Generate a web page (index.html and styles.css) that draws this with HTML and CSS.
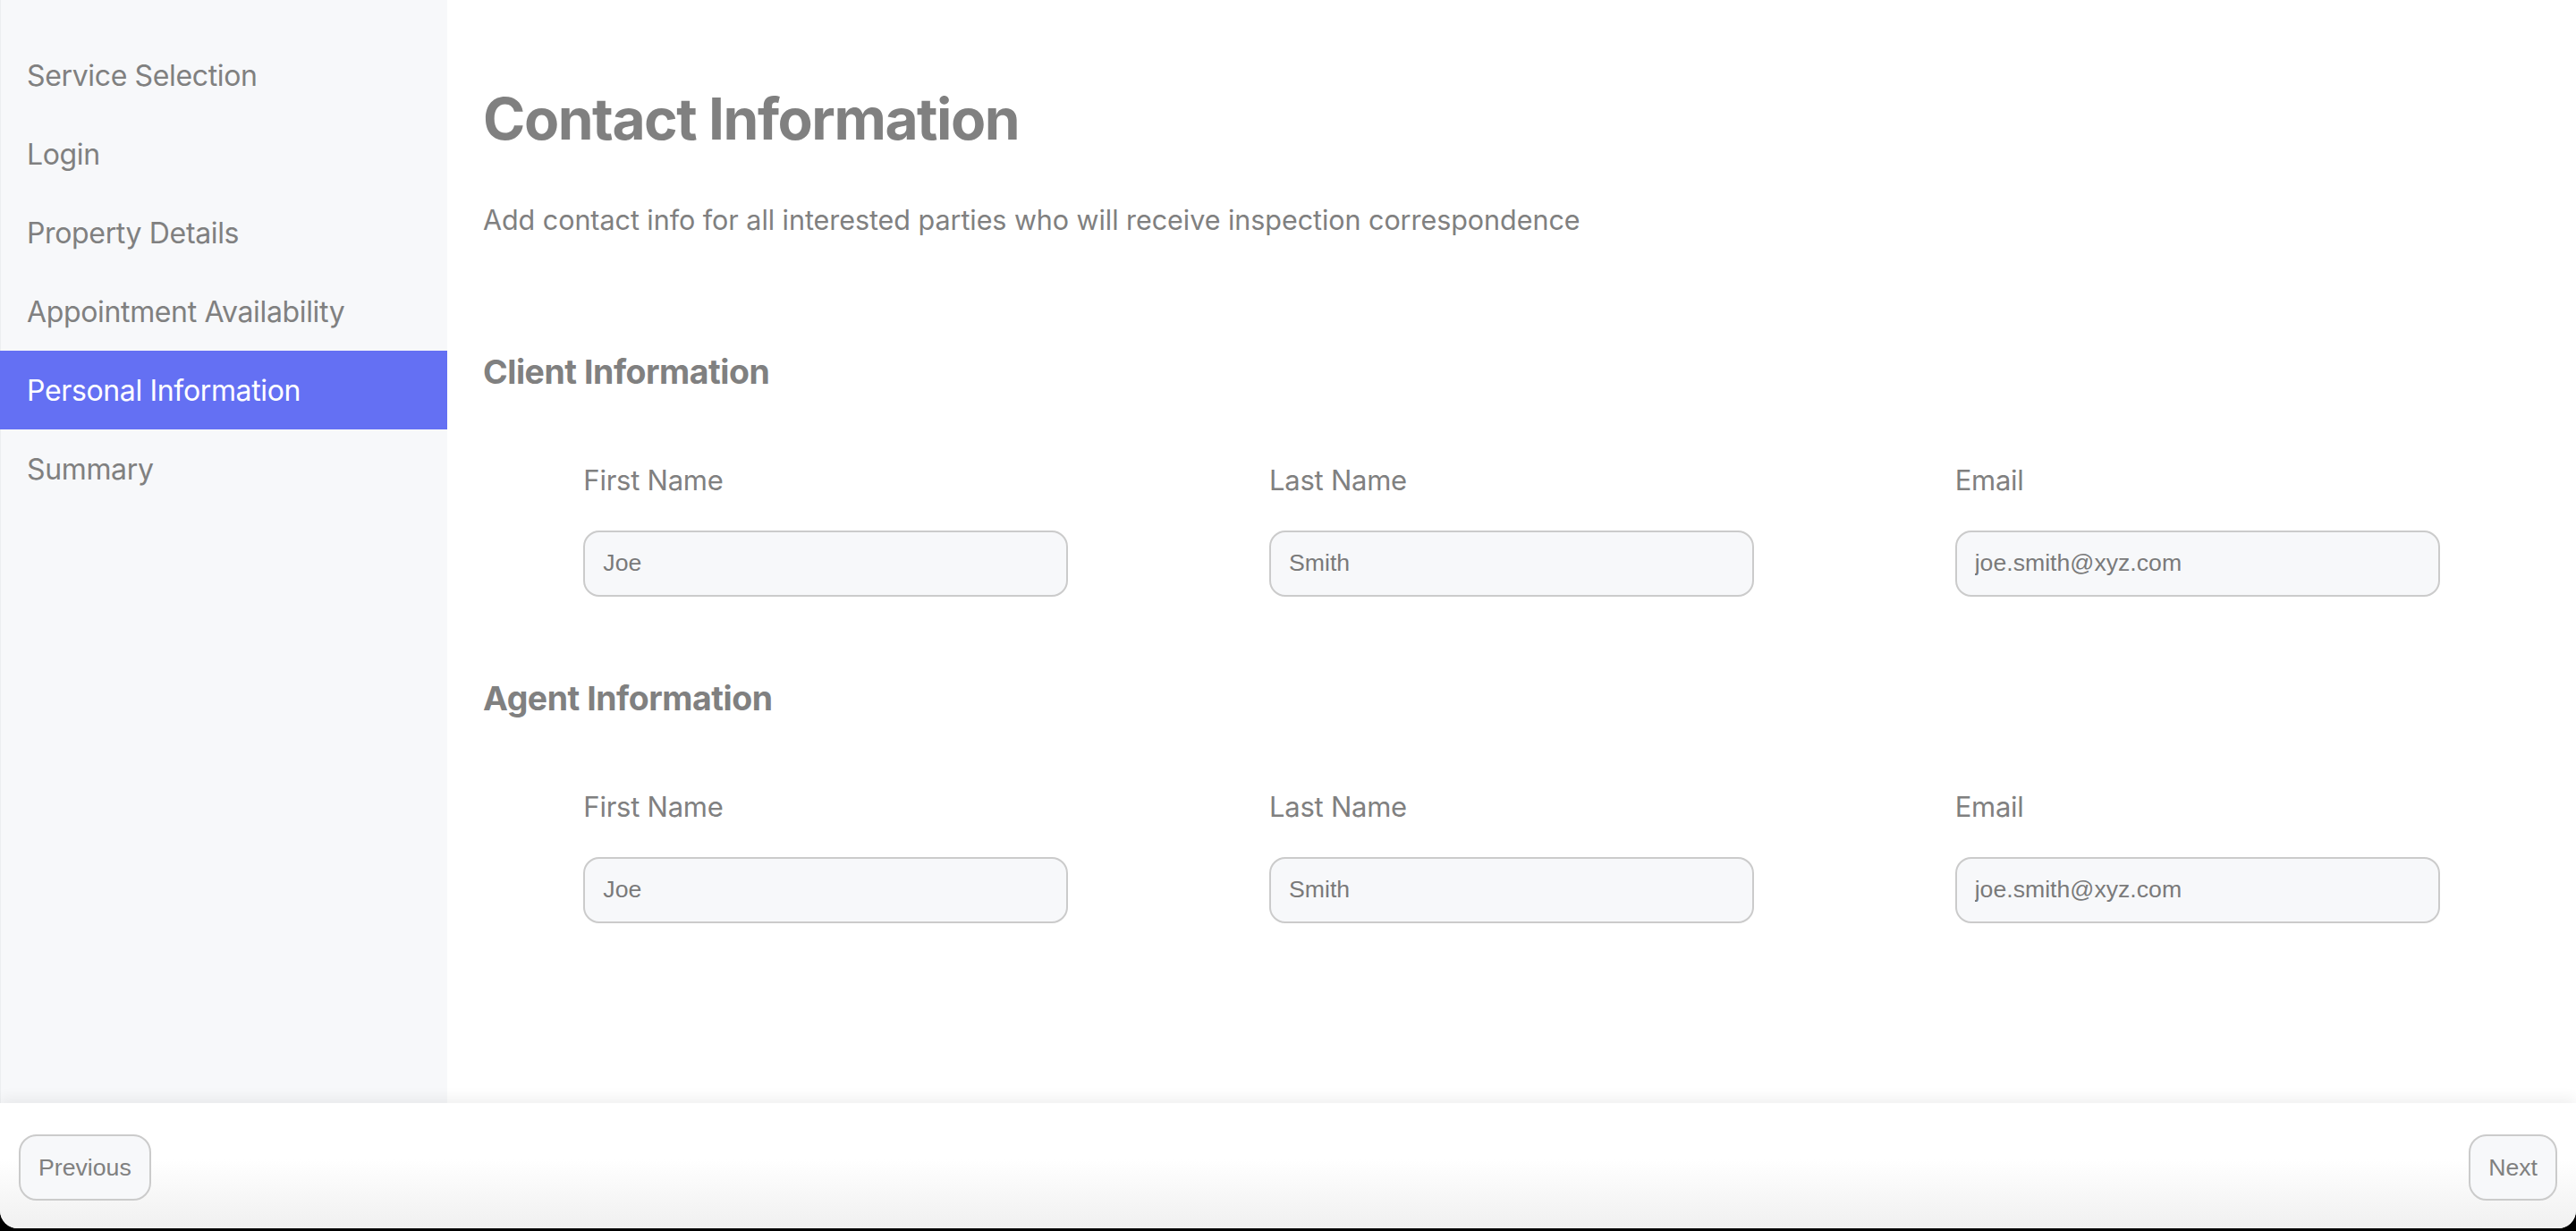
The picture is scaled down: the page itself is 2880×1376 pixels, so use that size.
FILE: index.html
```html
<!DOCTYPE html>
<html lang="en">
<head>
<meta charset="utf-8">
<title>Contact Information</title>
<link rel="stylesheet" href="styles.css">
</head>
<body>
<div class="window">
  <div class="layout">
    <nav class="sidebar">
      <a class="nav-item">Service Selection</a>
      <a class="nav-item">Login</a>
      <a class="nav-item">Property Details</a>
      <a class="nav-item">Appointment Availability</a>
      <a class="nav-item active">Personal Information</a>
      <a class="nav-item">Summary</a>
    </nav>
    <main class="main">
      <h1 class="title">Contact Information</h1>
      <p class="subtitle">Add contact info for all interested parties who will receive inspection correspondence</p>

      <section class="section">
        <h3 class="section-title">Client Information</h3>
        <div class="fields">
          <div class="field">
            <label class="label">First Name</label>
            <input class="input" type="text" value="Joe">
          </div>
          <div class="field">
            <label class="label">Last Name</label>
            <input class="input" type="text" value="Smith">
          </div>
          <div class="field">
            <label class="label">Email</label>
            <input class="input" type="text" value="joe.smith@xyz.com">
          </div>
        </div>
      </section>

      <section class="section">
        <h3 class="section-title">Agent Information</h3>
        <div class="fields">
          <div class="field">
            <label class="label">First Name</label>
            <input class="input" type="text" value="Joe">
          </div>
          <div class="field">
            <label class="label">Last Name</label>
            <input class="input" type="text" value="Smith">
          </div>
          <div class="field">
            <label class="label">Email</label>
            <input class="input" type="text" value="joe.smith@xyz.com">
          </div>
        </div>
      </section>
    </main>
  </div>
  <footer class="footer">
    <button class="btn" type="button">Previous</button>
    <button class="btn" type="button">Next</button>
  </footer>
</div>
</body>
</html>
```
FILE: styles.css
```css
* { box-sizing: border-box; }

html, body {
  margin: 0;
  padding: 0;
  background: #000;
}

body {
  font-family: Inter, "Noto Sans", sans-serif;
  color: #808080;
}

.window {
  height: 1373px;
  display: flex;
  flex-direction: column;
  background: #fff;
  border-radius: 0 0 20px 20px;
  overflow: hidden;
}

.layout {
  flex: 1;
  display: flex;
  min-height: 0;
}

.sidebar {
  width: 500px;
  flex: none;
  background: #f7f8fa;
  border-left: 1px solid #eceef0;
  padding-top: 40px;
  display: flex;
  flex-direction: column;
}

.nav-item {
  height: 88px;
  display: flex;
  align-items: center;
  padding-left: 29px;
  font-size: 32px;
  color: #808080;
  letter-spacing: -0.35px;
}

.nav-item.active {
  background: #6470f3;
  color: #fff;
  margin-left: -1px;
  padding-left: 30px;
}

.main {
  flex: 1;
  padding: 95px 40px 0 40px;
}

.title {
  margin: 0;
  font-size: 64px;
  line-height: 76.8px;
  font-weight: 700;
  letter-spacing: -1.45px;
}

.subtitle {
  margin: 56px 0 0 0;
  font-size: 30.5px;
  line-height: 36px;
  letter-spacing: -0.05px;
}

.section {
  margin-top: 129px;
}

.section + .section {
  margin-top: 91px;
}

.section-title {
  margin: 0;
  font-size: 37.44px;
  line-height: 45px;
  font-weight: 700;
  letter-spacing: -0.45px;
}

.fields {
  display: grid;
  grid-template-columns: repeat(3, 1fr);
  margin-top: 81px;
}

.field {
  width: 542px;
  justify-self: center;
  display: flex;
  flex-direction: column;
}

.label {
  font-size: 31px;
  line-height: 36px;
  letter-spacing: -0.25px;
}

.input {
  margin-top: 38px;
  height: 74px;
  width: 100%;
  border: 2px solid #cbcbcb;
  border-radius: 18px;
  background: #f7f8fa;
  padding: 0 20px;
  font-family: "Liberation Sans", Arial, sans-serif;
  font-size: 26.67px;
  color: #7a7a7a;
  outline: none;
}

.footer {
  height: 140px;
  flex: none;
  display: flex;
  justify-content: space-between;
  align-items: flex-start;
  padding: 35px 21px 0 21px;
  background: linear-gradient(to bottom, #ffffff 45%, #f0f0f0 100%);
  box-shadow: 0 -6px 14px rgba(0, 0, 0, 0.06);
  position: relative;
}

.btn {
  height: 74px;
  padding: 0 20px;
  border: 2px solid #cbcbcb;
  border-radius: 20px;
  background: #f7f8fa;
  font-family: "Liberation Sans", Arial, sans-serif;
  font-size: 26.67px;
  color: #808080;
}
```
